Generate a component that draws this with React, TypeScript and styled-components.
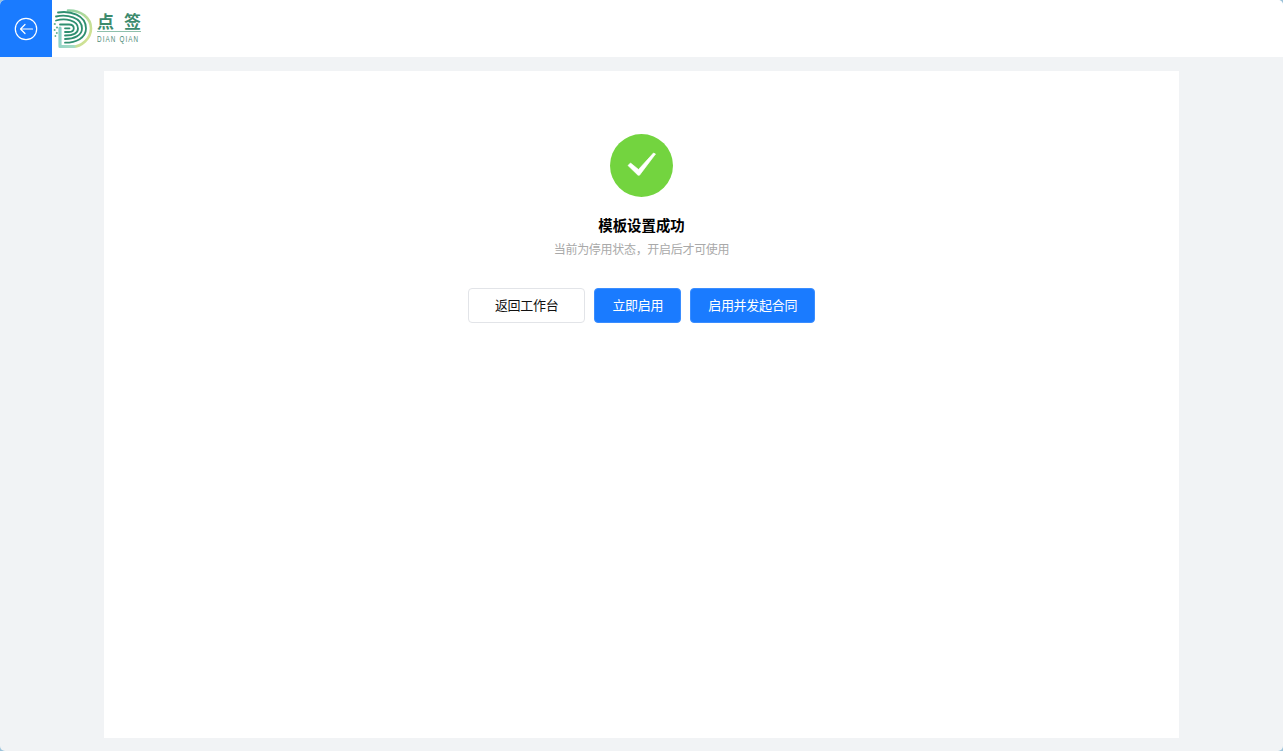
import React from "react";
import styled, { createGlobalStyle } from "styled-components";

const Global = createGlobalStyle`
  html, body { margin: 0; padding: 0; height: 100%; background: #9cc3da; }
  #root { height: 100%; }
  * { box-sizing: border-box; }
`;

const Shell = styled.div`
  width: 1283px;
  height: 751px;
  display: flex;
  flex-direction: column;
  overflow: hidden;
  border-radius: 5px;
  background: #f1f3f5;
  font-family: "Noto Sans CJK SC", "Liberation Sans", sans-serif;
`;

const Header = styled.header`
  height: 57px;
  flex: none;
  display: flex;
  align-items: stretch;
  background: #fff;
`;

const BackButton = styled.button`
  width: 52px;
  border: 0;
  padding: 0;
  display: flex;
  align-items: center;
  justify-content: center;
  background: #1a7bff;
`;

const Logo = styled.div`
  margin-left: 1px;
  display: flex;
  align-items: center;
  gap: 4px;
`;

const LogoWords = styled.div`
  display: flex;
  flex-direction: column;
  width: 44px;
  margin-top: -2px;
`;

const LogoCn = styled.div`
  display: flex;
  justify-content: space-between;
  height: 21px;
  font-size: 17px;
  line-height: 19px;
  font-weight: 700;
  color: #3c8a6d;
  border-bottom: 1px solid #8fc0ac;
`;

const LogoEn = styled.div`
  margin-top: 2px;
  font-family: "Liberation Sans", sans-serif;
  font-size: 9px;
  line-height: 11px;
  letter-spacing: 1.6px;
  color: #4f8d78;
  white-space: nowrap;
  transform: scaleX(0.7);
  transform-origin: left center;
`;

const Content = styled.main`
  flex: 1;
  padding: 14px 104px 13px;
  display: flex;
`;

const Card = styled.section`
  flex: 1;
  background: #fff;
  padding-top: 63px;
  display: flex;
  flex-direction: column;
  align-items: center;
`;

const Title = styled.h1`
  margin: 17px 0 0;
  font-size: 14.4px;
  line-height: 22px;
  font-weight: 700;
  color: #000;
`;

const Subtitle = styled.p`
  margin: 3px 0 0;
  font-size: 12px;
  line-height: 20px;
  letter-spacing: -0.3px;
  color: #a9a9a9;
`;

const Actions = styled.div`
  margin-top: 29px;
  display: flex;
  gap: 9px;
`;

const Button = styled.button<{ $primary?: boolean; $pad: number }>`
  height: 35px;
  padding: 0 ${(p) => p.$pad}px 2px;
  font: inherit;
  font-size: 13px;
  letter-spacing: -0.3px;
  border-radius: 4px;
  white-space: nowrap;
  border: 1px solid ${(p) => (p.$primary ? "#3a8dff" : "#e2e4e8")};
  background: ${(p) => (p.$primary ? "#1a7bff" : "#fff")};
  color: ${(p) => (p.$primary ? "#fff" : "#111")};
`;

const BackIcon = () => (
  <svg width="24" height="24" viewBox="0 0 24 24" fill="none" stroke="#fff" strokeWidth="1.2" strokeLinecap="round" strokeLinejoin="round">
    <circle cx="12" cy="12" r="10.7" />
    <path d="M18.5 12H6.5M11 7.5 6.5 12l4.500 4.500" />
  </svg>
);

const LogoMark = () => (
  <svg width="40" height="40" viewBox="0 0 40 40" fill="none" strokeLinecap="round">
    <defs>
      <linearGradient id="ring" x1="0" y1="0" x2="1" y2="1">
        <stop offset="0" stopColor="#8fd0a4" />
        <stop offset="1" stopColor="#dfe690" />
      </linearGradient>
      <linearGradient id="stem" x1="0" y1="0" x2="1" y2="1">
        <stop offset="0" stopColor="#86cfc8" />
        <stop offset="1" stopColor="#a6dcc4" />
      </linearGradient>
    </defs>
    <path d="M15 1.500C28 1 38 9 38 19.500S28 37.700 20 37.700" stroke="url(#ring)" strokeWidth="2.600" />
    <path d="M7 19v18.500h14" stroke="url(#stem)" strokeWidth="3.200" strokeLinejoin="round" />
    <g stroke="#2f8f70" strokeWidth="1.800">
      <path d="M5 3.500C17 1.500 33 6 33 19.500 33 29 23 33.700 12 33.700" />
      <path d="M3 7.500C14 5 29 8.500 29 19.500 29 26.500 21 30 12 30" />
      <path d="M3 11.500C12 9 25 11 25 19.500 25 24.500 19 26.500 12 26.500" />
      <path d="M7 15.500h9c3 0 4.800 1.600 4.800 3.800 0 2.500-2.200 3.700-4.800 3.700h-4" />
      <path d="M12 19.300h4.500" />
    </g>
    <g fill="#63b291">
      <circle cx="1.800" cy="15" r="1.100" />
      <circle cx="4" cy="18.500" r="1.100" />
      <circle cx="1.600" cy="21" r="1" />
      <circle cx="3.800" cy="24" r="1" />
      <circle cx="2.400" cy="27" r=".9" />
    </g>
  </svg>
);

const SuccessIcon = () => (
  <svg width="63" height="63" viewBox="0 0 63 63">
    <circle cx="31.500" cy="31.500" r="31.500" fill="#73d43f" />
    <path d="M18 31.500 20.500 29l8 6.500L43.500 19l2 1L29.500 41.200h-1.500z" fill="#fff" stroke="#fff" strokeWidth="0.7" strokeLinejoin="round" />
  </svg>
);

export default function App() {
  return (
    <>
      <Global />
      <Shell>
        <Header>
          <BackButton aria-label="返回">
            <BackIcon />
          </BackButton>
          <Logo>
            <LogoMark />
            <LogoWords>
              <LogoCn>
                <span>点</span>
                <span>签</span>
              </LogoCn>
              <LogoEn>DIAN QIAN</LogoEn>
            </LogoWords>
          </Logo>
        </Header>
        <Content>
          <Card>
            <SuccessIcon />
            <Title>模板设置成功</Title>
            <Subtitle>当前为停用状态，开启后才可使用</Subtitle>
            <Actions>
              <Button $pad={26}>返回工作台</Button>
              <Button $primary $pad={17}>立即启用</Button>
              <Button $primary $pad={17}>启用并发起合同</Button>
            </Actions>
          </Card>
        </Content>
      </Shell>
    </>
  );
}
